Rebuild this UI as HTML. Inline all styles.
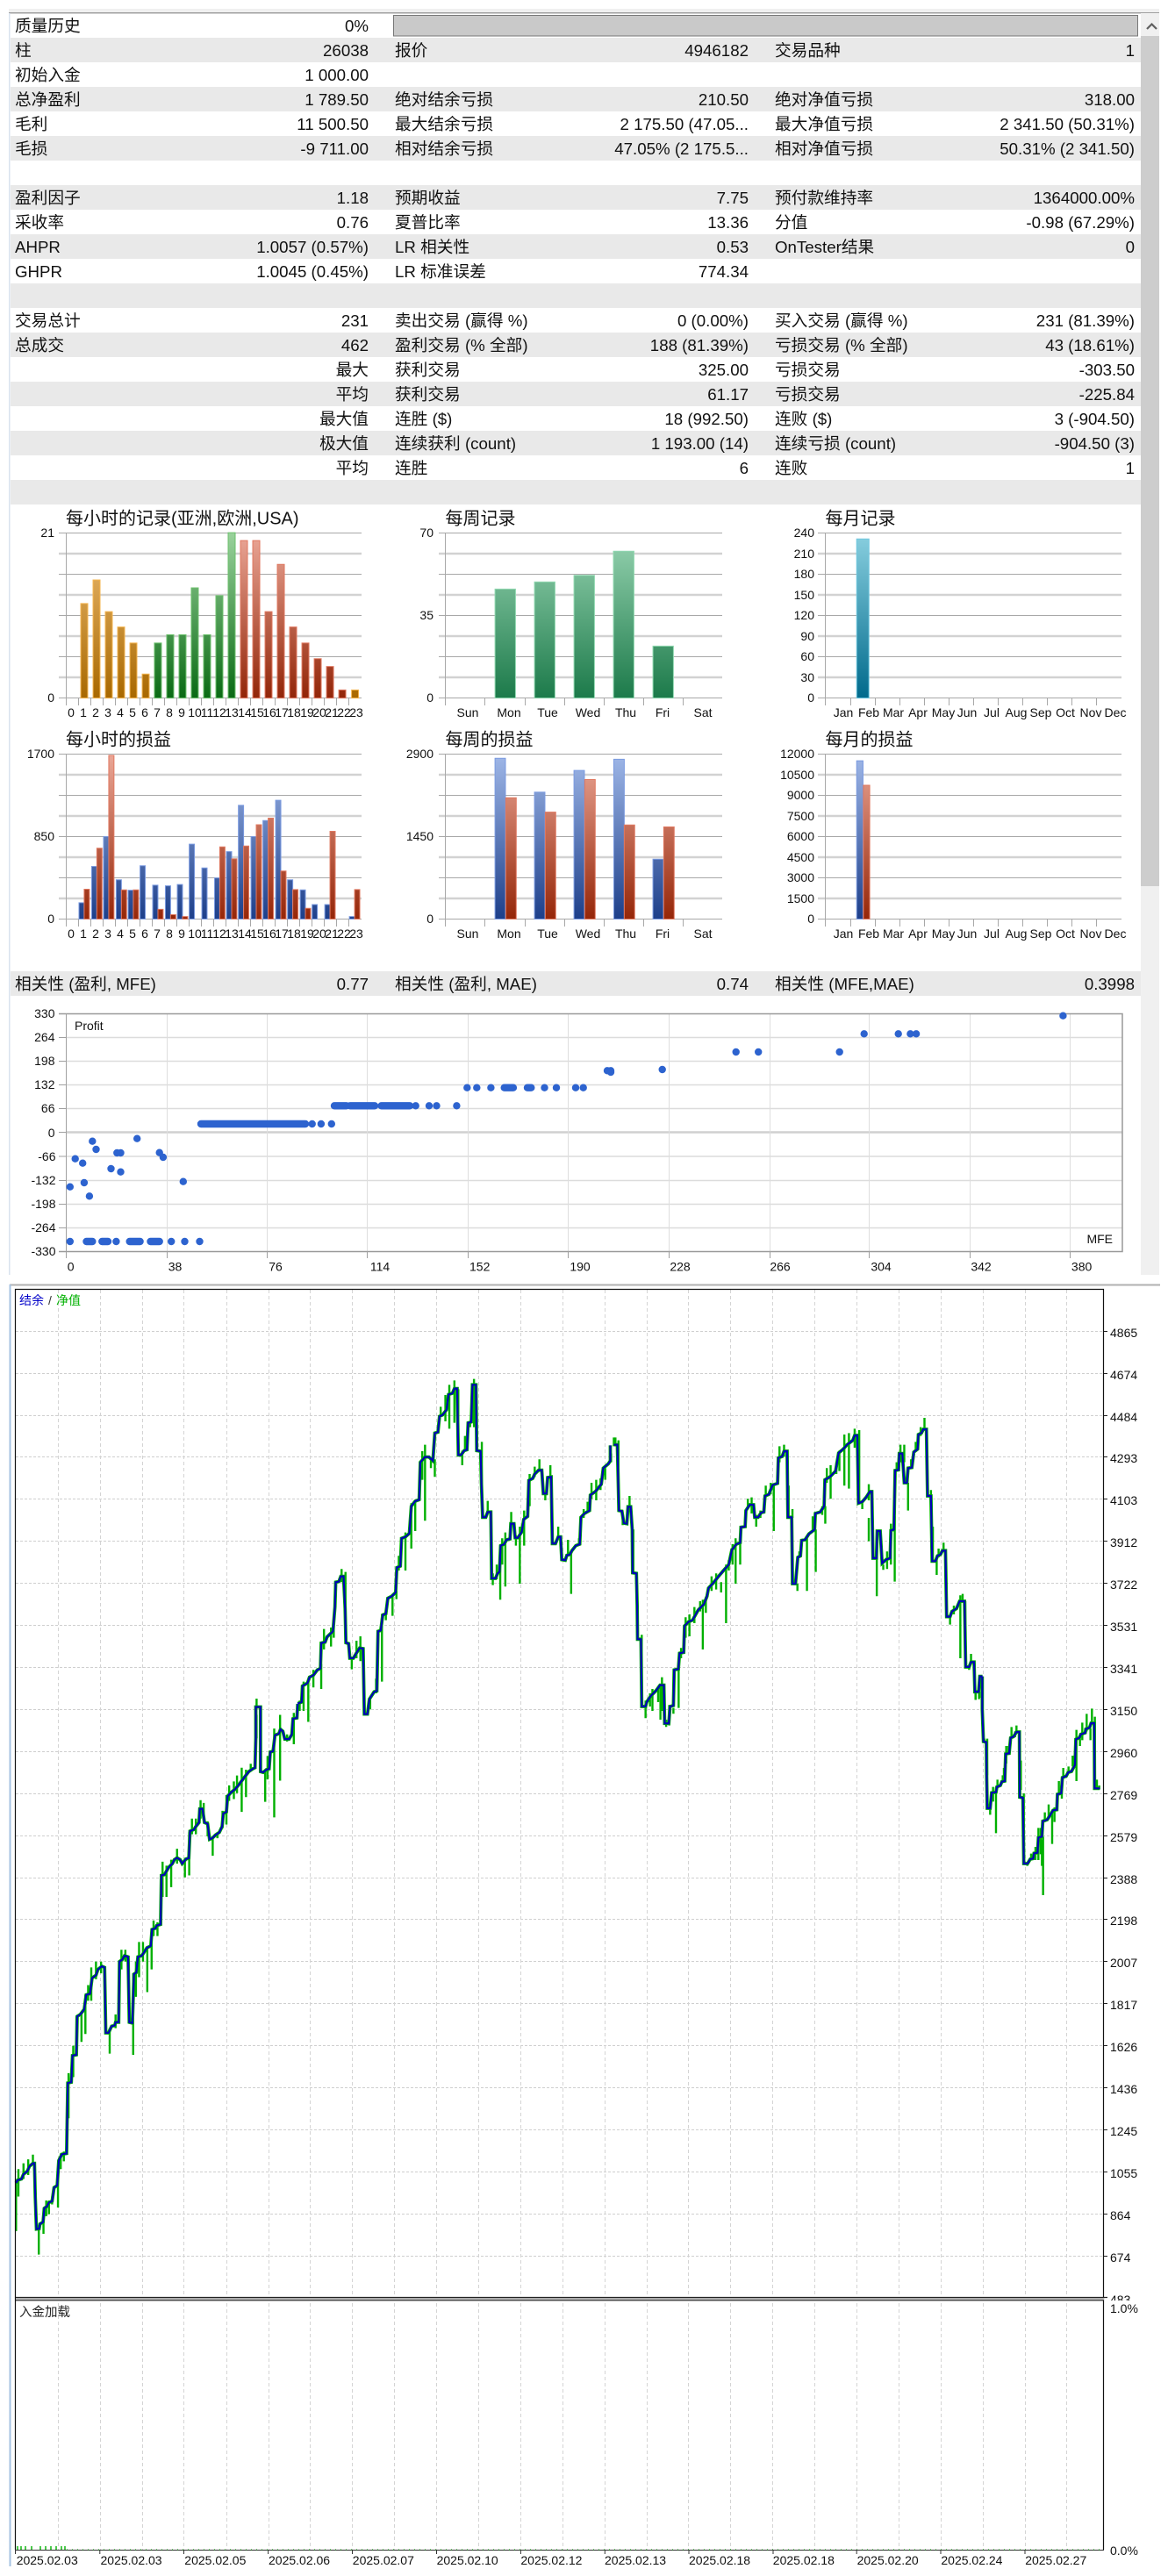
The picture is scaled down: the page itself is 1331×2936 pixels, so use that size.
<!DOCTYPE html>
<html><head><meta charset="utf-8"><title>Report</title>
<style>
html,body{margin:0;padding:0;background:#fff}
svg{display:block}
text{font-family:"Liberation Sans","Noto Sans CJK SC",sans-serif;fill:#111}
.t text{font-size:18.7px}
.c text{font-size:14px}
.tt text{font-size:20px}
.e text,text.e{text-anchor:end}
.m text{text-anchor:middle}
.g path{fill:none;stroke:#00b000;stroke-width:2.4;vector-effect:non-scaling-stroke}
.bp{fill:none;vector-effect:non-scaling-stroke}
.O rect{fill:url(#go);stroke:#f5b54f;vector-effect:non-scaling-stroke}
.G rect{fill:url(#gg);stroke:#6cc06c;vector-effect:non-scaling-stroke}
.R rect{fill:url(#gr);stroke:#e07860;vector-effect:non-scaling-stroke}
.W rect{fill:url(#gw);stroke:#90d8b0;vector-effect:non-scaling-stroke}
.C rect{fill:url(#gc);stroke:#70c8e0;vector-effect:non-scaling-stroke}
.B2 rect{fill:url(#gb2);stroke:#7a9ae0;vector-effect:non-scaling-stroke}
.R2 rect{fill:url(#gr2);stroke:#e07860;vector-effect:non-scaling-stroke}
.s path{fill:none;stroke:#2d63cf;stroke-width:8.4;stroke-linecap:round}
</style></head>
<body>
<svg xmlns="http://www.w3.org/2000/svg" width="1331" height="2936" viewBox="0 0 1331 2936">
<defs>
<linearGradient id="go" gradientUnits="userSpaceOnUse" x1="0" y1="132" x2="0" y2="660"><stop offset="0" stop-color="#f0c078"/><stop offset="1" stop-color="#a86800"/></linearGradient>
<linearGradient id="gg" gradientUnits="userSpaceOnUse" x1="0" y1="132" x2="0" y2="660"><stop offset="0" stop-color="#9ad29c"/><stop offset="1" stop-color="#0a6a14"/></linearGradient>
<linearGradient id="gr" gradientUnits="userSpaceOnUse" x1="0" y1="132" x2="0" y2="660"><stop offset="0" stop-color="#eba898"/><stop offset="1" stop-color="#922508"/></linearGradient>
<linearGradient id="gw" gradientUnits="userSpaceOnUse" x1="0" y1="132" x2="0" y2="660"><stop offset="0" stop-color="#98d4b2"/><stop offset="1" stop-color="#1c7a4a"/></linearGradient>
<linearGradient id="gc" gradientUnits="userSpaceOnUse" x1="0" y1="132" x2="0" y2="660"><stop offset="0" stop-color="#8ad0e0"/><stop offset="1" stop-color="#006a8c"/></linearGradient>
<linearGradient id="gb2" gradientUnits="userSpaceOnUse" x1="0" y1="838" x2="0" y2="1365"><stop offset="0" stop-color="#a0b8e8"/><stop offset="1" stop-color="#1d3f8a"/></linearGradient>
<linearGradient id="gr2" gradientUnits="userSpaceOnUse" x1="0" y1="838" x2="0" y2="1365"><stop offset="0" stop-color="#eba898"/><stop offset="1" stop-color="#952608"/></linearGradient>
<g id="grid">
<path d="M67 631H412M67 678H412M67 725H412M67 772H412M500 631H823M500 678H823M500 725H823M500 772H823M932 631H1278M932 678H1278M932 725H1278M932 772H1278" stroke="#d2d2d2" stroke-width="2.4" fill="none"/>
<path d="M67 607.5H412M67 654.5H412M67 701.5H412M67 748.5H412M67 795.5H412M500 607.5H823M500 654.5H823M500 701.5H823M500 748.5H823M500 795.5H823M932 607.5H1278M932 654.5H1278M932 701.5H1278M932 748.5H1278M932 795.5H1278" stroke="#a8a8a8" stroke-width="1" fill="none"/>
<path d="M75.5 607V804M89.5 796V804M103.5 796V804M117.5 796V804M131.5 796V804M145.5 796V804M159.5 796V804M173.5 796V804M187.5 796V804M201.5 796V804M215.5 796V804M229.5 796V804M243.5 796V804M257.5 796V804M271.5 796V804M285.5 796V804M299.5 796V804M313.5 796V804M327.5 796V804M341.5 796V804M355.5 796V804M369.5 796V804M383.5 796V804M397.5 796V804M507.5 607V804M552.5 796V804M598.5 796V804M643.5 796V804M688.5 796V804M733.5 796V804M778.5 796V804M940.5 607V804M969.5 796V804M997.5 796V804M1025.5 796V804M1053.5 796V804M1081.5 796V804M1109.5 796V804M1137.5 796V804M1165.5 796V804M1193.5 796V804M1221.5 796V804M1249.5 796V804" stroke="#a8a8a8" stroke-width="1" fill="none"/>
</g>
<path id="p1" class="bp" transform="translate(0,1950) scale(.4464)" d="M41 1205L45 1198L55 1195L60 1183L70 1175L75 1163L84 1155L88 1155L90 1240L93 1323L100 1322L102 1310L110 1305L113 1270L120 1265L125 1255L133 1252L138 1217L146 1212L150 1148L158 1132L170 1130L173 950L182 948L185 880L195 878L197 780L205 775L215 762L220 725L230 722L235 682L245 675L250 660L260 652L267 655L270 822L277 822L285 805L293 803L295 795L303 795L305 640L312 635L318 625L327 628L330 795L338 797L342 672L348 668L352 628L362 625L375 605L385 600L388 558L397 555L400 548L410 545L412 420L420 418L430 400L440 390L445 380L452 375L460 380L465 390L475 378L482 376L485 307L495 303L500 295L508 285L510 250L517 250L522 285L530 288L535 328L542 325L550 317L560 310L567 295L570 262L578 258L581 218L590 208L600 200L610 188L622 172L635 155L645 148L651 145L653 70L653 -10L665 -10L665 155L672 157L680 150L687 148L690 105L697 103L702 62L712 58L716 47L722 52L727 72L738 72L745 60L748 20L758 18L760 -18"/>
<path id="p2" class="bp" transform="translate(0,1450) scale(.4464,.3333)" d="M760 1475L770 1470L772 1415L785 1405L790 1385L800 1378L810 1360L818 1355L820 1268L830 1265L835 1247L850 1228L855 1145L857 1060L865 1058L870 1040L877 1040L881 1150L883 1267L890 1270L893 1320L902 1320L910 1302L918 1285L927 1287L930 1511L938 1511L943 1460L955 1435L962 1432L965 1228L972 1225L977 1172L985 1168L990 1115L1000 1108L1010 1095L1013 1010L1022 1005L1025 910L1035 905L1045 893L1050 800L1060 783L1070 778L1073 650L1085 632L1095 632L1105 645L1110 550L1118 547L1122 493L1130 488L1140 470L1145 418L1155 414L1160 398L1167 398L1170 625L1177 625L1185 610L1192 607L1195 515L1203 512L1206 385L1215 385L1217 610L1227 612L1229 725L1232 838L1240 838L1245 820L1253 820L1255 1047L1265 1047L1270 1030L1275 1025L1278 935L1287 930L1293 915L1302 912L1304 860L1312 860L1315 908L1322 908L1332 888L1337 845L1347 835L1350 712L1360 705L1365 690L1375 677L1383 677L1387 757L1395 757L1398 702L1407 700L1410 928L1418 928L1425 905L1431 905L1434 983L1443 985L1447 968L1455 965L1460 952L1470 935L1480 930L1483 838L1492 825L1505 815L1507 762L1520 750L1535 725L1540 670L1553 655L1558 645L1558 592"/>
<path id="p3" class="bp" transform="translate(650,1450) scale(.4348,.3333)" d="M114 590L123 590L125 700L127 815L135 817L140 858L148 860L151 802L158 802L162 880L163 1028L173 1030L175 1140L176 1255L185 1255L187 1485L197 1485L200 1470L210 1450L225 1430L235 1412L245 1412L247 1543L258 1543L261 1485L270 1482L272 1360L283 1357L286 1303L297 1300L299 1210L310 1195L320 1190L335 1155L350 1135L358 1108L362 1080L375 1062L385 1045L400 1022L415 1000L423 950L435 930L445 925L447 872L458 870L460 815L470 795L480 795L483 838L492 838L500 822L507 820L510 765L520 760L530 728L543 722L545 635L555 630L560 612L568 612L570 838L580 838L582 1065L590 1065L596 975L603 970L606 917L615 915L625 895L640 880L642 825L655 820L665 800L667 710L680 700L695 680L703 618L715 605L725 590L740 575L745 558L752 558L755 790L765 785L775 770L785 750L790 750L793 978L802 978L804 885L812 885L817 995L828 982L838 978L840 883L848 880L851 678L860 676L862 620L870 620L875 720L882 720L885 670L895 668L900 615L910 605L912 555L920 550L925 537L933 537L936 765L945 765L948 988L957 988L962 970L970 965L975 952L983 952L986 1178L995 1178L1000 1160L1012 1150L1020 1125L1033 1125L1036 1350L1045 1350L1050 1333L1058 1333L1060 1435L1070 1435L1073 1382L1080 1382"/>
<path id="p4" class="bp" transform="translate(1100,1920) scale(.3333)" d="M58 -28L58 85L62 195L72 197L73 310L75 423L85 423L90 370L105 368L108 350L120 345L125 332L135 330L138 237L150 235L155 182L165 178L175 162L185 162L186 385L197 387L200 612L213 612L222 597L232 595L235 577L247 575L250 523L262 520L265 467L280 462L290 447L300 430L313 428L315 375L328 372L332 318L345 313L352 300L363 297L375 275L378 187L390 182L395 170L410 165L412 152L425 147L430 132L441 132L442 355L460 355"/>
</defs>
<rect width="1331" height="2936" fill="#fff"/>

<!-- top band -->
<rect x="10" y="10" width="1311" height="4" fill="#f0f0f0"/>
<rect x="10" y="14" width="1311" height="1.5" fill="#a0a0a0"/>
<rect x="10" y="15" width="1.5" height="1438" fill="#d9e3ee"/>

<!-- stripes -->
<g fill="#e9e9e9">
<rect x="12" y="43" width="1288" height="28"/>
<rect x="12" y="99" width="1288" height="28"/>
<rect x="12" y="155" width="1288" height="28"/>
<rect x="12" y="211" width="1288" height="28"/>
<rect x="12" y="267" width="1288" height="28"/>
<rect x="12" y="323" width="1288" height="28"/>
<rect x="12" y="379" width="1288" height="28"/>
<rect x="12" y="435" width="1288" height="28"/>
<rect x="12" y="491" width="1288" height="28"/>
<rect x="12" y="547" width="1288" height="28"/>
<rect x="12" y="1107" width="1288" height="28"/>
</g>

<!-- scrollbar -->
<rect x="1300" y="15" width="21" height="1438" fill="#f0f0f0"/>
<rect x="1300" y="41" width="21" height="969" fill="#cdcdcd"/>
<path d="M1307 33L1312.5 27.5L1318 33" fill="none" stroke="#606060" stroke-width="2.2"/>

<!-- progress -->
<rect x="448.5" y="17.5" width="848" height="23.5" fill="#c9c9c9" stroke="#777" stroke-width="1"/>

<!-- table -->
<g class="t">
<text x="17" y="36">质量历史</text>
<text x="17" y="64">柱</text><text x="450" y="64">报价</text><text x="883" y="64">交易品种</text>
<text x="17" y="92">初始入金</text>
<text x="17" y="120">总净盈利</text><text x="450" y="120">绝对结余亏损</text><text x="883" y="120">绝对净值亏损</text>
<text x="17" y="148">毛利</text><text x="450" y="148">最大结余亏损</text><text x="883" y="148">最大净值亏损</text>
<text x="17" y="176">毛损</text><text x="450" y="176">相对结余亏损</text><text x="883" y="176">相对净值亏损</text>
<text x="17" y="232">盈利因子</text><text x="450" y="232">预期收益</text><text x="883" y="232">预付款维持率</text>
<text x="17" y="260">采收率</text><text x="450" y="260">夏普比率</text><text x="883" y="260">分值</text>
<text x="17" y="288">AHPR</text><text x="450" y="288">LR 相关性</text><text x="883" y="288">OnTester结果</text>
<text x="17" y="316">GHPR</text><text x="450" y="316">LR 标准误差</text>
<text x="17" y="372">交易总计</text><text x="450" y="372">卖出交易 (赢得 %)</text><text x="883" y="372">买入交易 (赢得 %)</text>
<text x="17" y="400">总成交</text><text x="450" y="400">盈利交易 (% 全部)</text><text x="883" y="400">亏损交易 (% 全部)</text>
<text x="450" y="428">获利交易</text><text x="883" y="428">亏损交易</text>
<text x="450" y="456">获利交易</text><text x="883" y="456">亏损交易</text>
<text x="450" y="484">连胜 ($)</text><text x="883" y="484">连败 ($)</text>
<text x="450" y="512">连续获利 (count)</text><text x="883" y="512">连续亏损 (count)</text>
<text x="450" y="540">连胜</text><text x="883" y="540">连败</text>
<text x="17" y="1128">相关性 (盈利, MFE)</text><text x="450" y="1128">相关性 (盈利, MAE)</text><text x="883" y="1128">相关性 (MFE,MAE)</text>
</g>
<g class="t e">
<text x="420" y="36">0%</text>
<text x="420" y="64">26038</text><text x="853" y="64">4946182</text><text x="1293" y="64">1</text>
<text x="420" y="92">1 000.00</text>
<text x="420" y="120">1 789.50</text><text x="853" y="120">210.50</text><text x="1293" y="120">318.00</text>
<text x="420" y="148">11 500.50</text><text x="853" y="148">2 175.50 (47.05...</text><text x="1293" y="148">2 341.50 (50.31%)</text>
<text x="420" y="176">-9 711.00</text><text x="853" y="176">47.05% (2 175.5...</text><text x="1293" y="176">50.31% (2 341.50)</text>
<text x="420" y="232">1.18</text><text x="853" y="232">7.75</text><text x="1293" y="232">1364000.00%</text>
<text x="420" y="260">0.76</text><text x="853" y="260">13.36</text><text x="1293" y="260">-0.98 (67.29%)</text>
<text x="420" y="288">1.0057 (0.57%)</text><text x="853" y="288">0.53</text><text x="1293" y="288">0</text>
<text x="420" y="316">1.0045 (0.45%)</text><text x="853" y="316">774.34</text>
<text x="420" y="372">231</text><text x="853" y="372">0 (0.00%)</text><text x="1293" y="372">231 (81.39%)</text>
<text x="420" y="400">462</text><text x="853" y="400">188 (81.39%)</text><text x="1293" y="400">43 (18.61%)</text>
<text x="420" y="428">最大</text><text x="853" y="428">325.00</text><text x="1293" y="428">-303.50</text>
<text x="420" y="456">平均</text><text x="853" y="456">61.17</text><text x="1293" y="456">-225.84</text>
<text x="420" y="484">最大值</text><text x="853" y="484">18 (992.50)</text><text x="1293" y="484">3 (-904.50)</text>
<text x="420" y="512">极大值</text><text x="853" y="512">1 193.00 (14)</text><text x="1293" y="512">-904.50 (3)</text>
<text x="420" y="540">平均</text><text x="853" y="540">6</text><text x="1293" y="540">1</text>
<text x="420" y="1128">0.77</text><text x="853" y="1128">0.74</text><text x="1293" y="1128">0.3998</text>
</g>

<!-- bar chart grids -->
<use href="#grid"/>
<use href="#grid" transform="translate(0,252)"/>

<!-- titles -->
<g class="tt">
<text x="75" y="597.5">每小时的记录(亚洲,欧洲,USA)</text>
<text x="507.5" y="597.5">每周记录</text>
<text x="940.5" y="597.5">每月记录</text>
<text x="75" y="849.5">每小时的损益</text>
<text x="507.5" y="849.5">每周的损益</text>
<text x="940.5" y="849.5">每月的损益</text>
</g>

<!-- y labels -->
<g class="c e">
<text x="62" y="612">21</text><text x="62" y="800">0</text>
<text x="494" y="612">70</text><text x="494" y="706">35</text><text x="494" y="800">0</text>
<text x="928" y="612">240</text><text x="928" y="636">210</text><text x="928" y="659">180</text><text x="928" y="683">150</text><text x="928" y="706">120</text><text x="928" y="730">90</text><text x="928" y="753">60</text><text x="928" y="777">30</text><text x="928" y="800">0</text>
<text x="62" y="864">1700</text><text x="62" y="958">850</text><text x="62" y="1052">0</text>
<text x="494" y="864">2900</text><text x="494" y="958">1450</text><text x="494" y="1052">0</text>
<text x="928" y="864">12000</text><text x="928" y="888">10500</text><text x="928" y="911">9000</text><text x="928" y="935">7500</text><text x="928" y="958">6000</text><text x="928" y="982">4500</text><text x="928" y="1005">3000</text><text x="928" y="1029">1500</text><text x="928" y="1052">0</text>
</g>

<!-- x labels -->
<g class="c m">
<text x="81" y="817">0</text><text x="95" y="817">1</text><text x="109" y="817">2</text><text x="123" y="817">3</text><text x="137" y="817">4</text><text x="151" y="817">5</text><text x="165" y="817">6</text><text x="179" y="817">7</text><text x="193" y="817">8</text><text x="207" y="817">9</text><text x="222" y="817">10</text><text x="236" y="817">11</text><text x="250" y="817">12</text><text x="264" y="817">13</text><text x="279" y="817">14</text><text x="293" y="817">15</text><text x="307" y="817">16</text><text x="321" y="817">17</text><text x="335" y="817">18</text><text x="350" y="817">19</text><text x="364" y="817">20</text><text x="378" y="817">21</text><text x="392" y="817">22</text><text x="406" y="817">23</text>
<text x="533" y="817">Sun</text><text x="580" y="817">Mon</text><text x="624" y="817">Tue</text><text x="670" y="817">Wed</text><text x="713" y="817">Thu</text><text x="755" y="817">Fri</text><text x="801" y="817">Sat</text>
<text x="961" y="817">Jan</text><text x="990" y="817">Feb</text><text x="1018" y="817">Mar</text><text x="1046" y="817">Apr</text><text x="1075" y="817">May</text><text x="1102" y="817">Jun</text><text x="1130" y="817">Jul</text><text x="1158" y="817">Aug</text><text x="1186" y="817">Sep</text><text x="1214" y="817">Oct</text><text x="1243" y="817">Nov</text><text x="1271" y="817">Dec</text>
<text x="81" y="1069">0</text><text x="95" y="1069">1</text><text x="109" y="1069">2</text><text x="123" y="1069">3</text><text x="137" y="1069">4</text><text x="151" y="1069">5</text><text x="165" y="1069">6</text><text x="179" y="1069">7</text><text x="193" y="1069">8</text><text x="207" y="1069">9</text><text x="222" y="1069">10</text><text x="236" y="1069">11</text><text x="250" y="1069">12</text><text x="264" y="1069">13</text><text x="279" y="1069">14</text><text x="293" y="1069">15</text><text x="307" y="1069">16</text><text x="321" y="1069">17</text><text x="335" y="1069">18</text><text x="350" y="1069">19</text><text x="364" y="1069">20</text><text x="378" y="1069">21</text><text x="392" y="1069">22</text><text x="406" y="1069">23</text>
<text x="533" y="1069">Sun</text><text x="580" y="1069">Mon</text><text x="624" y="1069">Tue</text><text x="670" y="1069">Wed</text><text x="713" y="1069">Thu</text><text x="755" y="1069">Fri</text><text x="801" y="1069">Sat</text>
<text x="961" y="1069">Jan</text><text x="990" y="1069">Feb</text><text x="1018" y="1069">Mar</text><text x="1046" y="1069">Apr</text><text x="1075" y="1069">May</text><text x="1102" y="1069">Jun</text><text x="1130" y="1069">Jul</text><text x="1158" y="1069">Aug</text><text x="1186" y="1069">Sep</text><text x="1214" y="1069">Oct</text><text x="1243" y="1069">Nov</text><text x="1271" y="1069">Dec</text>
</g>

<!-- bars -->
<g transform="translate(0,560) scale(.8489,.3571)">
<g class="O">
<rect x="108.4" y="358" width="9.4" height="302"/><rect x="124.9" y="283" width="9.4" height="377"/><rect x="141.4" y="384" width="9.4" height="276"/><rect x="157.9" y="433" width="9.4" height="227"/><rect x="174.4" y="484" width="9.4" height="176"/><rect x="190.9" y="583" width="9.4" height="77"/><rect x="471.9" y="634" width="9.4" height="26"/>
</g>
<g class="G">
<rect x="207.3" y="484" width="9.4" height="176"/><rect x="223.8" y="458" width="9.4" height="202"/><rect x="240.3" y="458" width="9.4" height="202"/><rect x="256.8" y="308" width="9.4" height="352"/><rect x="273.3" y="458" width="9.4" height="202"/><rect x="289.8" y="333" width="9.4" height="327"/><rect x="306.3" y="132" width="9.4" height="528"/>
</g>
<g class="R">
<rect x="322.8" y="157" width="9.4" height="503"/><rect x="339.3" y="157" width="9.4" height="503"/><rect x="355.8" y="384" width="9.4" height="276"/><rect x="372.3" y="233" width="9.4" height="427"/><rect x="388.8" y="433" width="9.4" height="227"/><rect x="405.3" y="484" width="9.4" height="176"/><rect x="421.8" y="534" width="9.4" height="126"/><rect x="438.3" y="559" width="9.4" height="101"/><rect x="454.8" y="634" width="9.4" height="26"/>
</g>
<g class="W">
<rect x="664.5" y="312" width="27.5" height="348"/><rect x="717.5" y="289" width="27.5" height="371"/><rect x="770.5" y="268" width="27.5" height="392"/><rect x="823.5" y="191" width="27.5" height="469"/><rect x="876.5" y="494" width="27.5" height="166"/>
</g>
<g class="C"><rect x="1150" y="152" width="16.5" height="508"/></g>

<g class="B2">
<rect x="106" y="1313" width="7" height="52"/><rect x="123" y="1197" width="7" height="168"/><rect x="139" y="1102" width="7" height="263"/><rect x="156" y="1240" width="7" height="125"/><rect x="172" y="1273" width="7" height="92"/><rect x="188" y="1195" width="7" height="170"/><rect x="205" y="1257" width="7" height="108"/><rect x="222" y="1259" width="7" height="106"/><rect x="238" y="1255" width="7" height="110"/><rect x="254" y="1126" width="7" height="239"/><rect x="271" y="1202" width="7" height="163"/><rect x="288" y="1234" width="7" height="131"/><rect x="304" y="1150" width="7" height="215"/><rect x="320" y="1002" width="7" height="363"/><rect x="337" y="1102" width="7" height="263"/><rect x="353" y="1051" width="7" height="314"/><rect x="370" y="986" width="7" height="379"/><rect x="386" y="1240" width="7" height="125"/><rect x="403" y="1272" width="7" height="93"/><rect x="419" y="1319" width="7" height="46"/><rect x="436" y="1319" width="7" height="46"/><rect x="469" y="1357" width="7" height="8"/>
<rect x="664.5" y="852" width="14" height="513"/><rect x="717.5" y="960" width="14" height="405"/><rect x="770.5" y="891" width="14" height="474"/><rect x="824" y="855" width="14" height="510"/><rect x="876.5" y="1174" width="14" height="191"/>
<rect x="1150" y="860" width="8.5" height="505"/>
</g>
<g class="R2">
<rect x="113" y="1270" width="7" height="95"/><rect x="130" y="1139" width="7" height="226"/><rect x="146" y="843" width="7" height="522"/><rect x="163" y="1272" width="7" height="93"/><rect x="179" y="1272" width="7" height="93"/><rect x="212" y="1334" width="7" height="31"/><rect x="229" y="1351" width="7" height="14"/><rect x="245" y="1357" width="7" height="8"/><rect x="295" y="1135" width="7" height="230"/><rect x="311" y="1173" width="7" height="192"/><rect x="327" y="1132" width="7" height="233"/><rect x="344" y="1064" width="7" height="301"/><rect x="360" y="1043" width="7" height="322"/><rect x="377" y="1212" width="7" height="153"/><rect x="393" y="1271" width="7" height="94"/><rect x="410" y="1331" width="7" height="34"/><rect x="443" y="1085" width="7" height="280"/><rect x="476" y="1271" width="7" height="94"/>
<rect x="679" y="978" width="14" height="387"/><rect x="732" y="1024" width="14" height="341"/><rect x="785" y="920" width="14" height="445"/><rect x="838" y="1065" width="14" height="300"/><rect x="891" y="1071" width="14" height="294"/>
<rect x="1159" y="938" width="8.5" height="427"/>
</g>
</g>

<!-- scatter -->
<path d="M75 1182.5H1279M75 1209.5H1279M75 1236.5H1279M75 1263.5H1279M75 1318H1279M75 1345.5H1279M75 1372.5H1279M75 1399.5H1279" stroke="#dcdcdc" stroke-width="1.6" fill="none"/>
<path d="M75 1290.5H1279" stroke="#d0d0d0" stroke-width="2.4" fill="none"/>
<path d="M190.5 1155V1426M304.5 1155V1426M418.5 1155V1426M533.5 1155V1426M647.5 1155V1426M762.5 1155V1426M877.5 1155V1426M990.5 1155V1426M1105.5 1155V1426M1219.5 1155V1426" stroke="#dedede" stroke-width="1" fill="none"/>
<path d="M67 1155.5H1279V1426.5H67" stroke="#999" stroke-width="1.5" fill="none"/>
<path d="M75.5 1155V1434M190.5 1426V1434M304.5 1426V1434M418.5 1426V1434M533.5 1426V1434M647.5 1426V1434M762.5 1426V1434M877.5 1426V1434M990.5 1426V1434M1105.5 1426V1434M1219.5 1426V1434" stroke="#a0a0a0" stroke-width="1" fill="none"/>
<path d="M67 1182.5H75M67 1209.5H75M67 1236.5H75M67 1263.5H75M67 1290.5H75M67 1318H75M67 1345.5H75M67 1372.5H75M67 1399.5H75" stroke="#a0a0a0" stroke-width="1" fill="none"/>
<g class="c e">
<text x="62.5" y="1160">330</text><text x="62.5" y="1187">264</text><text x="62.5" y="1214">198</text><text x="62.5" y="1241">132</text><text x="62.5" y="1268">66</text><text x="62.5" y="1296">0</text><text x="63.5" y="1323">-66</text><text x="63.5" y="1350">-132</text><text x="63.5" y="1377">-198</text><text x="63.5" y="1404">-264</text><text x="63.5" y="1431">-330</text>
</g>
<g class="c m">
<text x="80.6" y="1448.5">0</text><text x="199.5" y="1448.5">38</text><text x="314" y="1448.5">76</text><text x="433" y="1448.5">114</text><text x="546.7" y="1448.5">152</text><text x="661" y="1448.5">190</text><text x="775" y="1448.5">228</text><text x="889" y="1448.5">266</text><text x="1004" y="1448.5">304</text><text x="1118" y="1448.5">342</text><text x="1232.6" y="1448.5">380</text>
</g>
<g class="c"><text x="85" y="1174">Profit</text><text class="e" x="1268" y="1417">MFE</text></g>
<g class="s">
<path d="M229 1281H348M355.7 1281h.01M365.9 1281h.01M377.8 1281h.01"/>
<path d="M381 1260.3H394.7M399 1260.3H427M434.6 1260.3H467M473.7 1260.3h.01M489 1260.3h.01M497.5 1260.3h.01M520.4 1260.3h.01"/>
<path d="M532.3 1239.7h.01M543.3 1239.7h.01M559.4 1239.7h.01M574.7 1239.7H584.9M601 1239.7H605.3M620.5 1239.7h.01M634 1239.7h.01M656 1239.7h.01M664.7 1239.7h.01"/>
<path d="M692 1220.3h.01M696 1220.3h.01M696 1222h.01M754.7 1219h.01M838.7 1199h.01M864.2 1199h.01M956.7 1199h.01M984.7 1178.3h.01M1023.7 1178.3h.01M1037.4 1178.3h.01M1044.1 1178.3h.01M1211.4 1157.7h.01"/>
<path d="M79.8 1352.7h.01M85.7 1320.7h.01M94.2 1325.7h.01M95.9 1348h.01M101.9 1363.3h.01M105.3 1300.7h.01M109.5 1310h.01M126.5 1332h.01M133.3 1314h.01M137.5 1314h.01M137.5 1335.7h.01M156.2 1297.7h.01M181.7 1313.7h.01M185.9 1319h.01M208.8 1346.7h.01"/>
<path d="M79.8 1415h.01M98.5 1415H105.3M116.3 1415H123M132.4 1415h.01M147.7 1415H159.6M171.5 1415H181.7M195.2 1415h.01M210.5 1415h.01M227.5 1415h.01"/>
</g>

<!-- equity panel -->
<rect x="11" y="1463.5" width="1311" height="2" fill="#b0b0b0"/>
<rect x="10.5" y="1464" width="2" height="1461" fill="#a4c2e2"/>
<path d="M18 1517.5H1257M18 1565.5H1257M18 1613.5H1257M18 1660.5H1257M18 1708.5H1257M18 1756.5H1257M18 1804.5H1257M18 1852.5H1257M18 1900.5H1257M18 1948.5H1257M18 1996.5H1257M18 2044.5H1257M18 2092.5H1257M18 2140.5H1257M18 2187.5H1257M18 2235.5H1257M18 2283.5H1257M18 2331.5H1257M18 2379.5H1257M18 2427.5H1257M18 2475.5H1257M18 2523.5H1257M18 2571.5H1257" stroke="#cfcfcf" stroke-width="1" stroke-dasharray="3 2" fill="none"/>
<path d="M66.5 1470V2906M114.5 1470V2906M162.5 1470V2906M209.5 1470V2906M258.5 1470V2906M306.5 1470V2906M353.5 1470V2906M401.5 1470V2906M449.5 1470V2906M497.5 1470V2906M545.5 1470V2906M593.5 1470V2906M641.5 1470V2906M689.5 1470V2906M737.5 1470V2906M784.5 1470V2906M832.5 1470V2906M880.5 1470V2906M928.5 1470V2906M976.5 1470V2906M1024.5 1470V2906M1072.5 1470V2906M1120.5 1470V2906M1168.5 1470V2906M1215.5 1470V2906" stroke="#d4d4d4" stroke-width="1" stroke-dasharray="4 3" fill="none"/>

<!-- green equity -->
<g class="g">
<path transform="translate(0,1950) scale(.4464)" d="M41 1205V1328M47 1170V1240M60 1155V1195M72 1145V1185M84 1133V1160M99 1322V1388M111 1300V1335M118 1250V1290M125 1250V1285M133 1240V1260M148 1180V1268M155 1130V1170M163 1125V1150M175 925V1040M187 855V935M195 780V860M208 770V845M218 725V825M225 700V740M233 655V740M245 640V685M258 640V670M280 810V875M295 775V810M310 610V660M320 610V640M340 670V878M347 640V730M355 590V680M365 590V640M376 600V718M387 555V660M392 535V575M402 540V575M415 385V475M425 395V475M437 380V450M452 352V390M472 375V425M483 310V420M490 275V315M500 275V315M512 228V275M520 235V285M530 282V320M543 322V370M555 310V325M568 255V300M578 215V290M585 190V230M597 180V225M605 165V210M617 145V258M628 150V220M640 135V150M655 10V70M677 155V232M683 115V175M700 45V272M715 10V178M733 60V78M750 5V85M787 0V28"/>
<path transform="translate(0,1450) scale(.4464,.3333)" d="M655 1458V1490M765 1465V1500M775 1400V1500M787 1400V1500M800 1360V1420M820 1340V1425M827 1220V1290M845 1215V1280M852 1190V1250M872 1015V1060M882 1025V1150M898 1320V1358M910 1260V1320M920 1245V1330M945 1455V1495M960 1390V1440M975 1170V1400M985 1150V1190M1002 1110V1175M1012 1090V1118M1018 970V1020M1035 890V1020M1050 790V945M1060 785V885M1078 612V710M1085 590V850M1100 640V670M1110 640V700M1125 460V495M1137 420V510M1147 385V535M1160 370V515M1170 400V625M1180 610V660M1187 560V610M1200 515V530M1210 365V530M1230 580V725M1245 782V820M1258 1030V1070M1268 1000V1050M1277 960V1120M1282 910V1000M1290 890V1075M1305 820V860M1317 900V935M1327 870V1065M1338 815V935M1352 690V800M1365 665V700M1377 640V680M1392 760V780M1405 660V700M1425 870V910M1450 915V970M1458 950V1100M1478 910V935M1490 810V840M1500 785V815M1510 720V775M1522 710V780M1533 705V745M1545 670V710M1560 620V650M1567 565V595"/>
<path transform="translate(650,1450) scale(.4348,.3333)" d="M118 565V590M126 575V700M137 840V865M155 765V810M165 880V1030M175 1070V1255M187 1240V1400M197 1465V1525M208.6 1440V1485M215 1425V1500M230 1420V1470M236 1410V1530M240 1385V1500M251 1530V1555M259 1480V1550M270 1490V1510M283.7 1340V1490M290 1285V1320M302 1180V1250M312 1170V1245M325 1145V1200M340 1125V1160M347 1120V1290M355 1110V1165M370 1040V1090M382 1030V1085M395 1060V1095M408 1000V1200M415 985V1020M425 930V1000M433 910V1065M445 925V1000M465 775V810M475 770V825M487 830V870M498 815V840M512 730V770M525 720V760M533 725V885M548 595V650M560 590V630M572 730V835M582 810V840M595 1065V1090M600 955V975M620 910V1090M635 835V880M643 880V1025M660 800V830M668 800V860M672 670V720M682 660V775M697 650V690M705 610V680M718 555V730M730 550V740M745 535V600M757 540V790M765 790V810M782 725V780M782 840V920M803 980V1108M820 1000V1018M830 955V1015M840 860V1000M850 835V1058M855 650V680M865 590V650M875 590V650M885 720V815M893 640V670M905 580V610M918 530V560M928 498V540M945 745V850M950 870V990M960 985V1035M965 945V975M978 925V955M995 1180V1205M1005 1140V1170M1022 1105V1320M1028 1100V1130M1035 1125V1260M1045 1350V1360M1050 1305V1335M1062 1435V1462M1072 1435V1455"/>
<path transform="translate(1100,1920) scale(.3333)" d="M35 25V52M47 20V50M65 185V195M75 185V310M85 425V445M95 350V400M105 350V508M110 325V350M128 310V330M132 285V330M140 210V270M148 210V235M158 145V180M170 160V180M175 140V165M190 260V360M200 372V500M212 612V620M225 578V600M240 555V600M250 490V600M258 490V580M262 530V620M266 520V720M272 437V470M285 410V460M297 440V545M305 420V470M320 330V375M330 370V390M335 285V320M353 280V300M367 243V280M380 155V330M392 185V210M400 130V190M415 100V160M428 150V190M433 82V135M443 110V320M450 325V355M458 345V358"/>
</g>

<!-- green halo under balance line -->
<g stroke="#00b000" stroke-width="3.8" fill="none">
<use href="#p1"/><use href="#p2"/><use href="#p3"/><use href="#p4"/>
</g>
<!-- blue balance -->
<g stroke="#0000b8" stroke-width="2.2" fill="none">
<use href="#p1"/><use href="#p2"/><use href="#p3"/><use href="#p4"/>
</g>

<!-- legend -->
<text x="22" y="1487" style="fill:#0000c8;font-size:14px">结余</text>
<text x="55" y="1487" style="fill:#333;font-size:14px">/</text>
<text x="64" y="1487" style="fill:#00b000;font-size:14px">净值</text>
<text x="22" y="2640" style="fill:#222;font-size:14.5px">入金加载</text>

<!-- equity y labels -->
<g class="c">
<text x="1265" y="1524">4865</text><text x="1265" y="1572">4674</text><text x="1265" y="1620">4484</text><text x="1265" y="1667">4293</text><text x="1265" y="1715">4103</text><text x="1265" y="1763">3912</text><text x="1265" y="1811">3722</text><text x="1265" y="1859">3531</text><text x="1265" y="1907">3341</text><text x="1265" y="1955">3150</text><text x="1265" y="2003">2960</text><text x="1265" y="2051">2769</text><text x="1265" y="2099">2579</text><text x="1265" y="2147">2388</text><text x="1265" y="2194">2198</text><text x="1265" y="2242">2007</text><text x="1265" y="2290">1817</text><text x="1265" y="2338">1626</text><text x="1265" y="2386">1436</text><text x="1265" y="2434">1245</text><text x="1265" y="2482">1055</text><text x="1265" y="2530">864</text><text x="1265" y="2578">674</text><text x="1265" y="2626">483</text>
</g>
<rect x="1258" y="2622" width="42" height="6" fill="#fff"/>
<path d="M1258 1517.5h4M1258 1565.5h4M1258 1613.5h4M1258 1660.5h4M1258 1708.5h4M1258 1756.5h4M1258 1804.5h4M1258 1852.5h4M1258 1900.5h4M1258 1948.5h4M1258 1996.5h4M1258 2044.5h4M1258 2092.5h4M1258 2140.5h4M1258 2187.5h4M1258 2235.5h4M1258 2283.5h4M1258 2331.5h4M1258 2379.5h4M1258 2427.5h4M1258 2475.5h4M1258 2523.5h4M1258 2571.5h4" stroke="#222" stroke-width="1" fill="none"/>
<g class="c">
<text x="1265" y="2636">1.0%</text><text x="1265" y="2912">0.0%</text>
<text x="18.7" y="2923">2025.02.03</text><text x="114.5" y="2923">2025.02.03</text><text x="210.3" y="2923">2025.02.05</text><text x="306" y="2923">2025.02.06</text><text x="401.8" y="2923">2025.02.07</text><text x="497.6" y="2923">2025.02.10</text><text x="593.4" y="2923">2025.02.12</text><text x="689" y="2923">2025.02.13</text><text x="785" y="2923">2025.02.18</text><text x="880.8" y="2923">2025.02.18</text><text x="976.6" y="2923">2025.02.20</text><text x="1072.4" y="2923">2025.02.24</text><text x="1168.2" y="2923">2025.02.27</text>
</g>

<!-- frame -->
<path d="M17.5 2906V1469.5H1257.5V2906" fill="none" stroke="#111" stroke-width="1.2"/>
<rect x="18" y="2619" width="1240" height="2.5" fill="#bdbdbd"/>
<path d="M18 2618.5H1262M18 2621.8H1258" stroke="#222" stroke-width="1.2" fill="none"/>
<path d="M18 2906.5H1258" stroke="#333" stroke-width="1" fill="none"/>
<path d="M76 2906H1258" stroke="#00a000" stroke-width="1" stroke-dasharray="1 5" fill="none"/>
<path d="M20 2906V2902M24 2906V2902M29 2906V2902M36 2906V2902M46 2906V2902M52 2906V2902M58 2906V2902M64 2906V2902M70 2906V2902M74 2906V2902" stroke="#00b000" stroke-width="1.4" fill="none"/>
<path d="M17.5 2906V2911M113.8 2906V2911M209.5 2906V2911M305.6 2906V2911M401.5 2906V2911M497.5 2906V2911M593.4 2906V2911M689.3 2906V2911M785 2906V2911M881 2906V2911M976.2 2906V2911M1072 2906V2911M1168 2906V2911" stroke="#333" stroke-width="1" fill="none"/>
</svg>
</body></html>
